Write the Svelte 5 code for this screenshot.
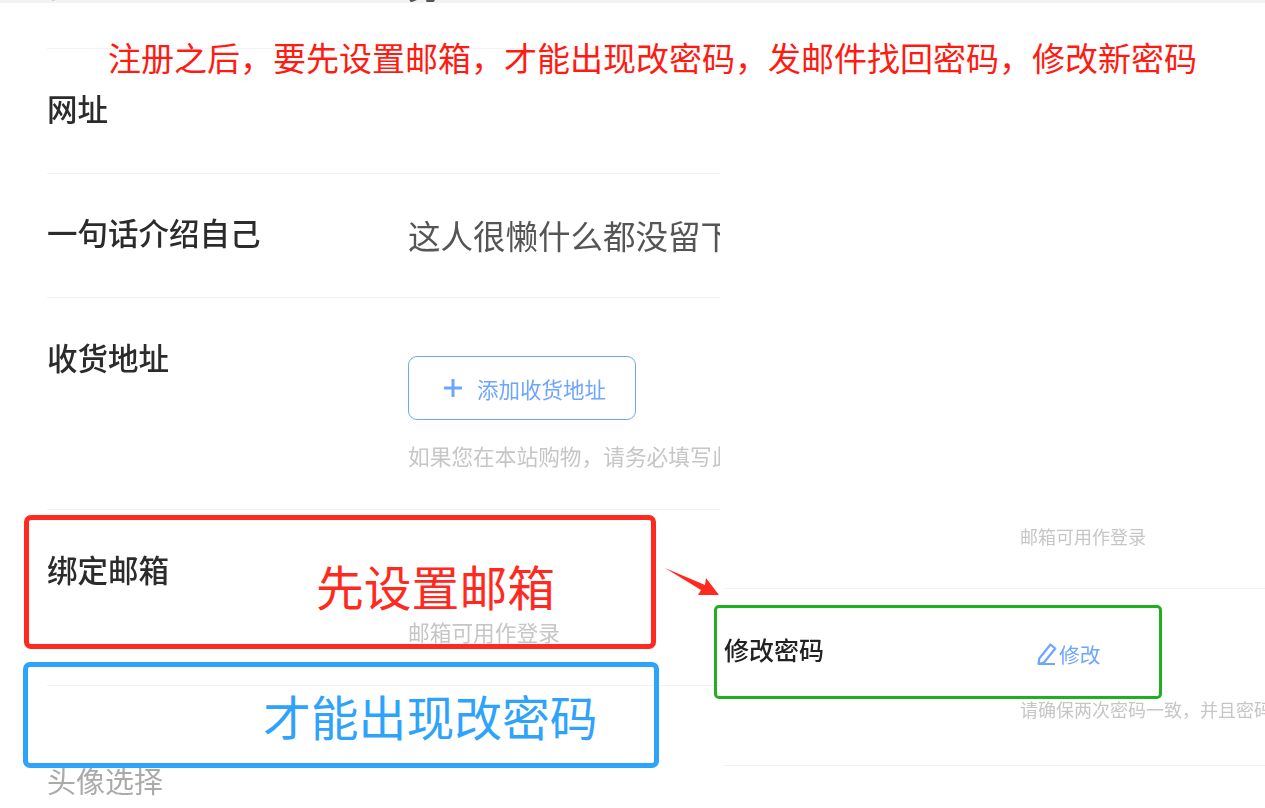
<script>
  const rows = [
    { label: '网址', cls: 'h125' },
    { label: '一句话介绍自己', cls: 'h124', value: '这人很懒什么都没留下' }
  ];
</script>

<div class="page">
  <div class="shot">
    <section class="left">
      <div class="row first">
        <div class="label">性别</div>
        <div class="value">男</div>
      </div>
      {#each rows as r}
        <div class="row {r.cls}">
          <div class="label">{r.label}</div>
          {#if r.value}<div class="value">{r.value}</div>{/if}
        </div>
      {/each}
      <div class="row address">
        <div class="label">收货地址</div>
        <div class="cell">
          <button class="add">
            <svg viewBox="0 0 18 18" width="18" height="18"><path d="M9 0v18M0 9h18" fill="none" stroke="#6ea5ff" stroke-width="3"/></svg>
            <span>添加收货地址</span>
          </button>
          <div class="hint">如果您在本站购物，请务必填写此项</div>
        </div>
      </div>
      <div class="row email">
        <div class="label">绑定邮箱</div>
        <div class="cell"><div class="hint">邮箱可用作登录</div></div>
      </div>
      <div class="row avatar">
        <div class="label">头像选择</div>
      </div>
    </section>

    <section class="right">
      <div class="rrow r-email">
        <div></div>
        <div class="rhint">邮箱可用作登录</div>
      </div>
      <div class="rrow r-pass">
        <div class="rlabel">修改密码</div>
        <div class="rcell">
          <div class="edit">
            <svg viewBox="0 0 22 24" width="22" height="24"><path d="M2 22h17M2.5 22l.8-5.5L14.5 2.5l4.8 4L8 20.5z" fill="none" stroke="#6ea5ff" stroke-width="2.2" stroke-linejoin="round"/></svg>
            <span>修改</span>
          </div>
          <div class="rhint wrapless">请确保两次密码一致，并且密码长度不少于六位</div>
        </div>
      </div>
    </section>
  </div>

  <div class="note">注册之后，要先设置邮箱，才能出现改密码，发邮件找回密码，修改新密码</div>
  <div class="box red"><span>先设置邮箱</span></div>
  <div class="box blue"><span>才能出现改密码</span></div>
  <div class="box green"></div>
  <svg class="arrow" viewBox="0 0 60 32" width="60" height="32"><polygon points="1,2 41,19 42,12 55,29 34,29 37,24" fill="#ff2a1f"/></svg>
</div>

<style>
  :global(body) {
    margin: 0;
    background: #fff;
  }
  .page {
    position: relative;
    width: 1265px;
    height: 808px;
    overflow: hidden;
    background: #fff;
    font-family: "Noto Sans CJK SC", "Liberation Sans", sans-serif;
  }
  .shot {
    display: flex;
    height: 808px;
    border-top: 3px solid #f3f3f3;
    box-sizing: border-box;
    filter: blur(0.5px);
  }
  .left {
    width: 720px;
    flex: none;
    overflow: hidden;
    margin-top: -3px;
    padding-left: 47px;
    box-sizing: border-box;
  }
  .row {
    display: grid;
    grid-template-columns: 361px 1fr;
    box-sizing: border-box;
    border-bottom: 1px solid #f2f2f2;
    padding-top: 39px;
    white-space: nowrap;
    overflow: hidden;
  }
  .label {
    font-size: 30.5px;
    line-height: 40px;
    font-weight: 500;
    color: #2b2b2b;
  }
  .value {
    font-size: 32.5px;
    line-height: 44px;
    margin-top: 1px;
    color: #555;
    font-weight: 400;
  }
  .first {
    padding-top: 0;
    margin-top: -36px;
    height: 85px;
  }
  .first .label { color: #777; }
  .first .value { margin-top: -1px; }
  .h125 { height: 125px; }
  .h124 { height: 124px; padding-top: 38px; }
  .address { height: 212px; }
  .email { height: 176px; }
  .avatar { border-bottom: 0; padding-top: 74px; }
  .avatar .label { color: #aaa; font-size: 29px; font-weight: 400; }
  .cell {
    display: flex;
    flex-direction: column;
    align-items: flex-start;
  }
  .address .cell { padding-top: 19px; }
  .email .cell { padding-top: 66px; }
  .add {
    display: flex;
    align-items: center;
    gap: 15px;
    width: 228px;
    height: 64px;
    padding: 0 0 0 35px;
    box-sizing: border-box;
    background: #fff;
    border: 1.5px solid #6ea5ff;
    border-radius: 9px;
    color: #6ea5ff;
    font: 21.5px "Noto Sans CJK SC", sans-serif;
  }
  .hint {
    margin-top: 19px;
    font-size: 21.7px;
    line-height: 34px;
    color: #c6c6c6;
    white-space: nowrap;
  }
  .email .hint { margin-top: 0; }
  .right {
    flex: 1;
    min-width: 0;
    padding-left: 4px;
    overflow: hidden;
    margin-top: -3px;
  }
  .rrow {
    display: grid;
    grid-template-columns: 296px 1fr;
    box-sizing: border-box;
    border-bottom: 1px solid #f2f2f2;
    white-space: nowrap;
  }
  .r-email { height: 589px; padding-top: 521px; margin-left: -1px; padding-left: 1px; }
  .r-pass { height: 177px; padding-top: 42px; margin-left: -1px; padding-left: 1px; }
  .rlabel {
    font-size: 25px;
    line-height: 36px;
    font-weight: 500;
    color: #222;
  }
  .rhint {
    font-size: 18px;
    line-height: 30px;
    color: #c6c6c6;
  }
  .rcell { min-width: 0; }
  .edit {
    display: flex;
    align-items: center;
    gap: 1px;
    padding: 7px 0 0 16px;
    height: 32px;
    font-size: 20.8px;
    line-height: 32px;
    color: #6ea5ff;
  }
  .wrapless { margin-top: 24px; }
  .note {
    position: absolute;
    left: 108px;
    top: 34px;
    font-size: 33px;
    line-height: 46px;
    color: #ff1a12;
    white-space: nowrap;
  }
  .box {
    position: absolute;
    box-sizing: border-box;
    white-space: nowrap;
  }
  .box span {
    position: absolute;
    font-size: 47.8px;
    line-height: 60px;
  }
  .red {
    left: 24px;
    top: 515px;
    width: 632px;
    height: 134px;
    border: 5px solid #ff2a1f;
    border-radius: 7px;
    color: #ff2a1f;
  }
  .red span { left: 287px; top: 36px; }
  .blue {
    left: 23px;
    top: 662px;
    width: 636px;
    height: 106px;
    border: 5px solid #2ea3fb;
    border-radius: 7px;
    color: #2ea3fb;
  }
  .blue span { left: 235px; top: 19px; }
  .green {
    left: 714px;
    top: 605px;
    width: 448px;
    height: 94px;
    border: 3px solid #1fb01f;
    border-radius: 5px;
  }
  .arrow {
    position: absolute;
    left: 664px;
    top: 566px;
  }
</style>
